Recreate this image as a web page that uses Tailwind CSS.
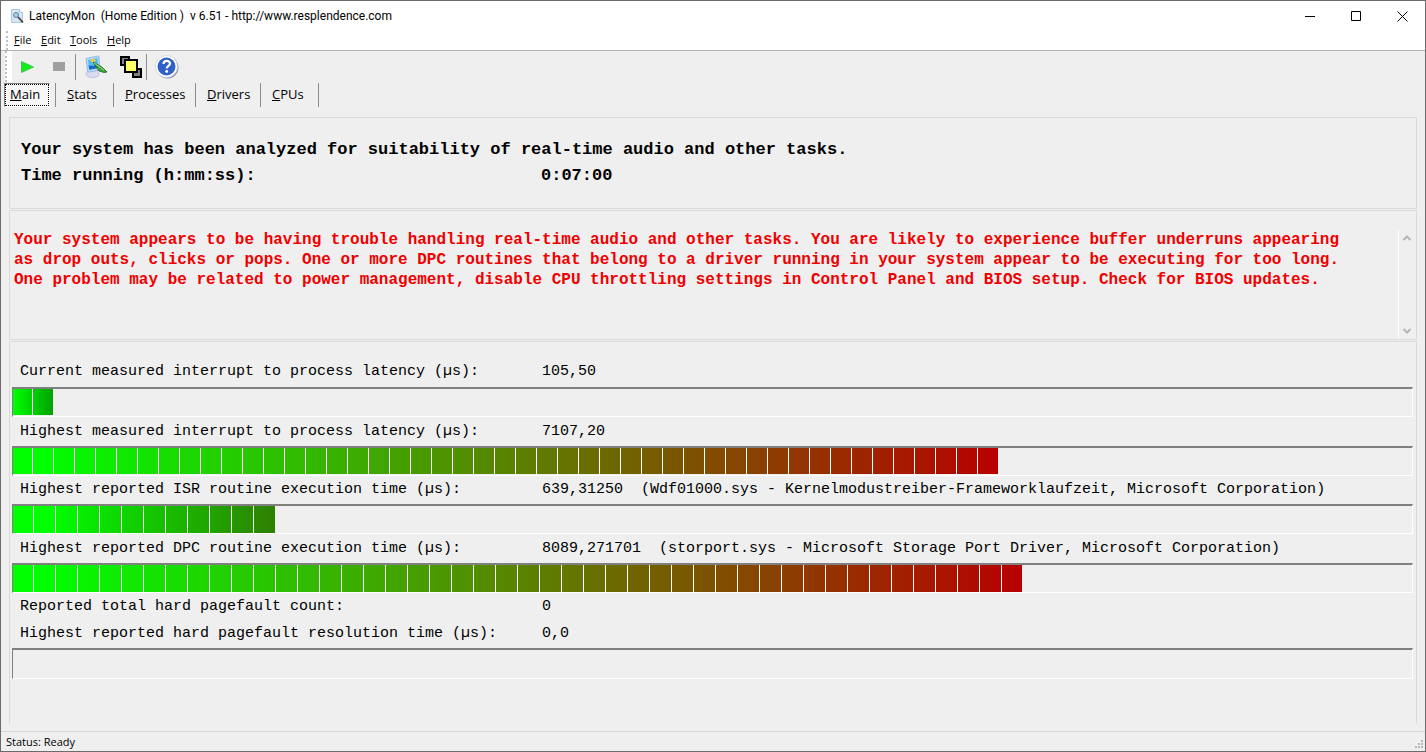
<!DOCTYPE html>
<html lang="en">
<head>
<meta charset="utf-8">
<title>LatencyMon</title>
<script src="https://cdn.jsdelivr.net/npm/@tailwindcss/browser@4"></script>
</head>
<body class="bg-[#efefef] text-black">
<div class="flex min-h-screen flex-col border border-[#6b6b6b] bg-[#efefef] font-['Open_Sans','Noto_Sans',sans-serif]">
  <header class="flex h-[30px] items-center bg-white pl-2 text-xs">
    <svg class="mr-1 size-4 shrink-0" viewBox="0 0 16 16" aria-hidden="true">
      <path d="M2.500 1.500h8l3 3v10h-11z" fill="#d6e7f2" stroke="#a9c8dc"/>
      <path d="M10.500 1.500v3h3" fill="#fff" stroke="#a9c8dc"/>
      <circle cx="7" cy="7" r="2.500" fill="#a8cbe2" stroke="#5d87a6"/>
      <path d="M9 9l5 5.500" stroke="#4a3a3c" stroke-width="1.800"/>
    </svg>
    <h1 class="grow whitespace-pre font-['Roboto','Open_Sans',sans-serif]">LatencyMon  (Home Edition )  v 6.51 - http://www.resplendence.com</h1>
    <button class="flex h-full w-[46px] items-center justify-center" aria-label="Minimize"><svg class="size-[11px]" viewBox="0 0 11 11"><path d="M0 5.500h10" stroke="#000"/></svg></button>
    <button class="flex h-full w-[46px] items-center justify-center" aria-label="Maximize"><svg class="size-[11px]" viewBox="0 0 11 11"><path d="M.5.5h9v9h-9z" fill="none" stroke="#000"/></svg></button>
    <button class="flex h-full w-[46px] items-center justify-center" aria-label="Close"><svg class="size-[11px]" viewBox="0 0 11 11"><path d="M.5.5l10 10m0-10l-10 10" stroke="#000"/></svg></button>
  </header>
  <nav class="flex h-5 items-center border-b border-[#b4b4b4] bg-white pl-[5px] text-[11px]" aria-label="Menu">
    <span class="h-full w-2 border-l-2 border-dotted border-[#c0c0c0]"></span>
    <button class="w-[27px] text-left"><u>F</u>ile</button>
    <button class="w-[29px] text-left"><u>E</u>dit</button>
    <button class="w-[37px] text-left"><u>T</u>ools</button>
    <button class="text-left"><u>H</u>elp</button>
  </nav>
  <div class="flex h-[31px] items-center pl-1" role="toolbar">
    <span class="h-full w-[7px] border-l-2 border-dotted border-[#c0c0c0] bg-white"></span>
    <button class="flex w-[30px] justify-center" aria-label="Start"><svg class="h-3 w-[13px]" viewBox="0 0 13 12"><path d="M.5.5L12.500 6L.5 11.500z" fill="#0df01a" stroke="#4fc455"/></svg></button>
    <button class="flex w-[33px] justify-center" aria-label="Stop"><svg class="h-[9px] w-3" viewBox="0 0 12 9"><path d="M0 0h12v9H0z" fill="#a0a0a0"/></svg></button>
    <span class="h-[26px] w-px bg-[#8c8c8c]"></span>
    <button class="flex w-10 justify-center" aria-label="Options"><svg class="size-6" viewBox="0 0 24 24">
      <path d="M4 15h9l2 4c0 2-3 3.500-6.500 3.500S2 21 2 19z" fill="#dcdcf0" stroke="#b0b2d0" stroke-width=".7"/>
      <path d="M2 3.500l12-2.500c1 0 1 .5 1 1l1 13-11 2c-1 0-1.500-.5-1.500-1z" fill="#b9dcf5" stroke="#7fb0e0" stroke-width=".8"/>
      <path d="M4 5l9.500-2 .8 10-9 1.800z" fill="#4cbcf2"/>
      <path d="M4.500 10.500l5 .5 4.500-2 .3 4-9 1.800z" fill="#1c66c4"/>
      <path d="M6 5.500c2-2 5-2 6 0L9 8z" fill="#f4c54b"/>
      <path d="M9 7l9 5 5 5-3 .5-5-1.500z" fill="#45a53d" stroke="#1b6228" stroke-width=".8"/>
      <path d="M10 8l10 7" stroke="#9bdc78"/>
    </svg></button>
    <button class="flex w-[30px] justify-center" aria-label="Windows"><svg class="size-[22px]" viewBox="0 0 22 22">
      <path d="M1 1h8v8H1zM13 13h8v8h-8z" fill="#808080" stroke="#000" stroke-width="2"/>
      <path d="M5 4h12v12H5z" fill="#ffff66" stroke="#000" stroke-width="2"/>
    </svg></button>
    <span class="h-[26px] w-px bg-[#8c8c8c]"></span>
    <button class="flex w-10 justify-center" aria-label="Help"><svg class="size-6" viewBox="0 0 24 24">
      <circle cx="12.500" cy="12.500" r="11" fill="#8d95a8"/>
      <circle cx="11.500" cy="11.500" r="11" fill="#fff" stroke="#b9c6e0" stroke-width=".6"/>
      <circle cx="11.500" cy="11.500" r="9" fill="#2f5fc8"/>
      <path d="M8.500 9c0-4 6.500-4 6.500-.5 0 2.500-3.300 2.200-3.300 5" fill="none" stroke="#fff" stroke-width="2.200"/>
      <circle cx="11.700" cy="16.500" r="1.400" fill="#fff"/>
    </svg></button>
  </div>
  <div class="flex h-[25px] items-center pl-[3px] text-[13px]" role="tablist">
    <button role="tab" aria-selected="true" class="h-6 w-[46px] border border-t-[#808080] border-l-[#808080] border-r-white border-b-white bg-[#f7f7f7]"><span class="flex h-full items-center border border-dotted border-black pl-1"><span><u>M</u>ain</span></span></button>
    <button role="tab" class="ml-[5px] h-6 w-[58px] border-l border-[#8c8c8c] pl-[11px] text-left"><u>S</u>tats</button>
    <button role="tab" class="h-6 w-[82px] border-l border-[#8c8c8c] pl-[11px] text-left"><u>P</u>rocesses</button>
    <button role="tab" class="h-6 w-[65px] border-l border-[#8c8c8c] pl-[11px] text-left"><u>D</u>rivers</button>
    <button role="tab" class="h-6 w-[59px] border-x border-[#8c8c8c] pl-[11px] text-left"><u>C</u>PUs</button>
  </div>
  <main class="mx-2 mt-2 flex grow flex-col font-['Liberation_Mono',monospace]">
    <section class="mt-0.5 h-[92px] border border-[#dadada] pl-[11px] pt-[19px] text-[17px] leading-[26px] font-bold">
      <p>Your system has been analyzed for suitability of real-time audio and other tasks.</p>
      <p class="flex"><span class="w-[520px]">Time running (h:mm:ss):</span><span>0:07:00</span></p>
    </section>
    <section class="mt-px flex h-[130px] border border-[#dadada] pl-1 pt-[19px] text-base leading-5 font-bold text-[#f00000]">
      <p class="grow whitespace-nowrap">Your system appears to be having trouble handling real-time audio and other tasks. You are likely to experience buffer underruns appearing<br>as drop outs, clicks or pops. One or more DPC routines that belong to a driver running in your system appear to be executing for too long.<br>One problem may be related to power management, disable CPU throttling settings in Control Panel and BIOS setup. Check for BIOS updates.</p>
      <div class="flex w-[18px] shrink-0 flex-col items-start justify-between border-l border-white py-[5px] pl-[3px]">
        <svg class="h-1.5 w-2.5" viewBox="0 0 10 6"><path d="M1.500 5L5 1.500L8.500 5" fill="none" stroke="#b4b4b4" stroke-width="2"/></svg>
        <svg class="h-1.5 w-2.5" viewBox="0 0 10 6"><path d="M1.500 1L5 4.500L8.500 1" fill="none" stroke="#b4b4b4" stroke-width="2"/></svg>
      </div>
    </section>
    <section class="mt-px grow border border-b-0 border-[#dadada] pl-0.5 pr-[3px] pt-[15px] text-[15px]">
      <p class="flex h-[30px] items-center pt-px pl-2"><span class="w-[522px]">Current measured interrupt to process latency (µs):</span><span>105,50</span></p>
      <div class="h-[30px] border-t-2 border-r border-b border-l border-t-[#808080] border-l-[#808080] border-r-white border-b-white"><div class="h-[26px] bg-[repeating-linear-gradient(to_right,transparent_0_19px,#fff_19px_20px,transparent_20px_21px),linear-gradient(to_right,#00ff00,#00a000)]" style="width:2.9%"></div></div>
      <p class="flex h-[29px] items-center pt-px pl-2"><span class="w-[522px]">Highest measured interrupt to process latency (µs):</span><span>7107,20</span></p>
      <div class="h-[30px] border-t-2 border-r border-b border-l border-t-[#808080] border-l-[#808080] border-r-white border-b-white"><div class="h-[26px] bg-[repeating-linear-gradient(to_right,transparent_0_19px,#fff_19px_20px,transparent_20px_21px),linear-gradient(to_right,#00ff00_3%,#b80000)]" style="width:70.4%"></div></div>
      <p class="flex h-7 items-center pl-2"><span class="w-[522px]">Highest reported ISR routine execution time (µs):</span><span class="whitespace-pre">639,31250  (Wdf01000.sys - Kernelmodustreiber-Frameworklaufzeit, Microsoft Corporation)</span></p>
      <div class="h-[30px] border-t-2 border-r border-b border-l border-t-[#808080] border-l-[#808080] border-r-white border-b-white"><div class="h-[27px] bg-[repeating-linear-gradient(to_right,transparent_0_20px,#fff_20px_21px,transparent_21px_22px),linear-gradient(to_right,#00ff00_14%,#2e8000)]" style="width:18.7%"></div></div>
      <p class="flex h-[29px] items-center pt-px pl-2"><span class="w-[522px]">Highest reported DPC routine execution time (µs):</span><span class="whitespace-pre">8089,271701  (storport.sys - Microsoft Storage Port Driver, Microsoft Corporation)</span></p>
      <div class="h-[30px] border-t-2 border-r border-b border-l border-t-[#808080] border-l-[#808080] border-r-white border-b-white"><div class="h-[27px] bg-[repeating-linear-gradient(to_right,transparent_0_20px,#fff_20px_21px,transparent_21px_22px),linear-gradient(to_right,#00ff00_3%,#b80000)]" style="width:72.1%"></div></div>
      <p class="flex h-7 items-center pt-px pl-2"><span class="w-[522px]">Reported total hard pagefault count:</span><span>0</span></p>
      <p class="flex h-[27px] items-center pl-2"><span class="w-[522px]">Highest reported hard pagefault resolution time (µs):</span><span>0,0</span></p>
      <div class="h-[31px] border-t-2 border-r border-b border-l border-t-[#808080] border-l-[#808080] border-r-white border-b-white"></div>
    </section>
  </main>
  <footer class="mt-[7px] flex h-5 items-center justify-between border-t border-[#d7d7d7] pl-[5px] text-[11px]">
    <span class="pt-0.5">Status: Ready</span>
    <svg class="size-3 self-end" viewBox="0 0 12 12" aria-hidden="true"><path d="M8 1h2v2H8zM5 4h2v2H5zM8 4h2v2H8zM2 7h2v2H2zM5 7h2v2H5zM8 7h2v2H8z" fill="#b8b8b8"/></svg>
  </footer>
</div>
</body>
</html>
